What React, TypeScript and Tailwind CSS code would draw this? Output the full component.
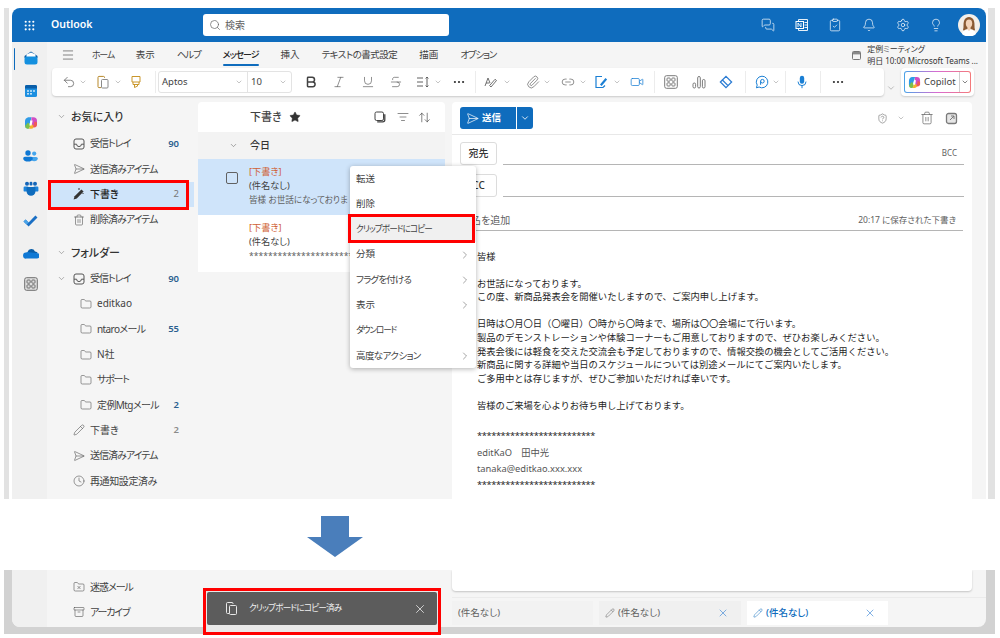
import type { ReactNode } from 'react';
import {
  Archive,
  ArrowUpDown,
  Bell,
  Bold,
  ChevronDown,
  ChevronRight,
  Clock,
  Ellipsis,
  Folder,
  FolderX,
  Grip,
  Italic,
  Lightbulb,
  Link2,
  ListFilter,
  Menu,
  MessagesSquare,
  Paperclip,
  Pencil,
  Search,
  SendHorizontal,
  Settings,
  ShieldQuestion,
  Star,
  Strikethrough,
  Trash2,
  Underline,
  Undo2,
  Video,
  X,
  ClipboardCheck,
} from 'lucide-react';

function Chev({ className = '' }: { className?: string }) {
  return <ChevronDown size={8} strokeWidth={1.5} className={`shrink-0 text-[#8a8a8a] ${className}`} />;
}

function Divider({ className = '' }: { className?: string }) {
  return <div className={`w-px h-[22px] shrink-0 bg-[#ececec] ${className}`} />;
}

function OutlookIcon() {
  return (
    <svg width="16" height="16" viewBox="0 0 16 16">
      <path d="M1.5 6 8 1.5 14.5 6v2H1.5z" fill="#0a5ea8" />
      <path d="M3.5 4.5 8 2.6l4.5 1.9V8h-9z" fill="#fff" />
      <rect x="1.5" y="6.5" width="13" height="8" rx="2.5" fill="#1490df" />
    </svg>
  );
}

function CalendarIcon() {
  return (
    <svg width="14" height="14" viewBox="0 0 14 14">
      <rect x="1" y="1" width="12" height="12" rx="1.6" fill="#1c8fe0" />
      <path d="M1 4.5V2.6A1.6 1.6 0 0 1 2.6 1h8.8A1.6 1.6 0 0 1 13 2.6v1.9z" fill="#0a5ea8" />
      <g fill="#bfe0f7">
        <rect x="3" y="6.2" width="2" height="1.6" />
        <rect x="6" y="6.2" width="2" height="1.6" />
        <rect x="9" y="6.2" width="2" height="1.6" />
        <rect x="3" y="9" width="2" height="1.6" />
        <rect x="6" y="9" width="2" height="1.6" />
      </g>
    </svg>
  );
}

function CopilotIcon({ size = 14 }: { size?: number }) {
  return (
    <svg width={size} height={size} viewBox="0 0 14 14">
      <path d="M4.2 1.2h3.4L6 7 3.8 12.6A3 3 0 0 1 1 9.8V5.6a4.4 4.4 0 0 1 3.2-4.4z" fill="#2f9be6" />
      <path d="M1.4 9.6 4 6.4 6.6 9 5 12.8H3.6A2.6 2.6 0 0 1 1.4 9.6z" fill="#7cc04a" />
      <path d="M5 12.8 7 7.4l3.6 1.4-1 2.4a2.6 2.6 0 0 1-2.4 1.6z" fill="#f4b32d" />
      <path d="M7.6 1.2h1.8A3.6 3.6 0 0 1 13 4.8v3.4a2.6 2.6 0 0 1-2.4 2.2L7 7.6z" fill="#d04fc4" />
      <path d="M10.6 5.2 13 6.6v2.2a2.8 2.8 0 0 1-2.8 2.6l-1.2-.2z" fill="#ef5a58" />
      <path d="M6.4 4.6h2.2L7.6 9.4H5.4z" fill="#fff" />
    </svg>
  );
}

function PeopleIcon() {
  return (
    <svg width="15" height="14" viewBox="0 0 15 14">
      <circle cx="5" cy="4" r="2.7" fill="#0f78d4" />
      <circle cx="11.2" cy="4.6" r="2.1" fill="#45a5ec" />
      <path d="M9 8h4.2a1.6 1.6 0 0 1 1.6 1.6c0 1.7-1.6 2.6-3.6 2.6-1 0-1.8-.2-2.5-.7z" fill="#45a5ec" />
      <path d="M1.8 7.8h6.4A1.6 1.6 0 0 1 9.8 9.4c0 2-2 3.1-4.8 3.1S.2 11.4.2 9.4a1.6 1.6 0 0 1 1.6-1.6z" fill="#0f78d4" />
    </svg>
  );
}

function TeamsIcon() {
  return (
    <svg width="16" height="15" viewBox="0 0 16 15">
      <circle cx="4" cy="2.8" r="2" fill="#1465b8" />
      <circle cx="12" cy="2.8" r="2" fill="#1465b8" />
      <rect x="0.6" y="5.6" width="5" height="5" rx="1.2" fill="#1c84dc" />
      <rect x="10.4" y="5.6" width="5" height="5" rx="1.2" fill="#1c84dc" />
      <path d="M3.6 6h8.8v4.4a4.4 4.4 0 0 1-8.8 0z" fill="#0f6cbd" />
      <rect x="6.6" y="0.8" width="2.8" height="3.6" rx="1.2" fill="#1465b8" />
    </svg>
  );
}

function TodoIcon() {
  return (
    <svg width="15" height="12" viewBox="0 0 15 12">
      <path d="M.5 6.6 2.6 4.4l3 3L12.4.4l2.1 2.2L5.6 11.6z" fill="#1a6fc4" />
      <path d="M.5 6.6 2.6 4.4l3 3-1.9 2z" fill="#4aa3e8" />
    </svg>
  );
}

function OneDriveIcon() {
  return (
    <svg width="16" height="11" viewBox="0 0 16 11">
      <path d="M4.6 3.8A4 4 0 0 1 12 3.4a3 3 0 0 1 2.8 1.6L6.4 8z" fill="#0a5ea8" />
      <path d="M3.4 10.6A3 3 0 0 1 2.8 4.6a3.6 3.6 0 0 1 3.4-.4L15 5.2a2.8 2.8 0 0 1-1 5.4z" fill="#0f78d4" />
    </svg>
  );
}

function AppsIcon({ light }: { light?: boolean }) {
  return (
    <svg width="14" height="14" viewBox="0 0 14 14" fill="none" stroke={light ? '#7a7a7a' : '#6e6e6e'}>
      <rect x="0.7" y="0.7" width="12.6" height="12.6" rx="1.8" fill={light ? 'none' : '#dedede'} />
      <rect x="3" y="3" width="3.2" height="3.2" rx="0.8" />
      <rect x="7.8" y="3" width="3.2" height="3.2" rx="0.8" />
      <rect x="3" y="7.8" width="3.2" height="3.2" rx="0.8" />
      <rect x="7.8" y="7.8" width="3.2" height="3.2" rx="0.8" />
    </svg>
  );
}

function Avatar() {
  return (
    <svg width="22" height="22" viewBox="0 0 22 22">
      <circle cx="11" cy="11" r="11" fill="#f3efe9" />
      <path d="M5 16c1-3 0-6 1-9 1-3 3-4 5-4s4 1 5 4c1 3 0 6 1 9-2 2-10 2-12 0z" fill="#8a5a33" />
      <ellipse cx="11" cy="9.6" rx="3.2" ry="4" fill="#f3d3b8" />
      <path d="M4 20c1-4 4-5 7-5s6 1 7 5a11 11 0 0 1-14 0z" fill="#fff" />
      <path d="M9.4 13h3.2v2.4L11 17l-1.6-1.6z" fill="#f3d3b8" />
    </svg>
  );
}

function TrayIcon() {
  return (
    <svg width="12" height="12" viewBox="0 0 12 12" fill="none" stroke="currentColor">
      <rect x="1" y="1" width="10" height="10" rx="2" />
      <path d="M1 6.2h2.6a2.4 2.4 0 0 0 4.8 0H11" />
    </svg>
  );
}

function CopyIcon() {
  return (
    <svg width="12" height="12" viewBox="0 0 12 12" fill="none" stroke="currentColor">
      <rect x="1" y="1" width="8.5" height="8.5" rx="1.6" />
      <path d="M10.8 3.2v5.6a2 2 0 0 1-2 2H3.2" strokeWidth="1.3" />
    </svg>
  );
}

function FolderRow({ icon, label, count, sub, muted, labelClass = 'tracking-[-1px]' }: { icon: ReactNode; label: string; count?: string; sub?: boolean; muted?: boolean; labelClass?: string }) {
  return (
    <div className={`h-[25.3px] flex items-center gap-[5px] pr-[19px] ${sub ? 'pl-[32px]' : 'pl-[25px]'}`}>
      <span className="w-[13px] shrink-0 flex justify-center text-[#555]">{icon}</span>
      <span className={`text-[10px] text-[#424242] whitespace-nowrap ${labelClass}`}>{label}</span>
      {count && <span className={`ml-auto text-[9.5px] font-semibold ${muted ? 'text-[#8a8a8a] font-normal' : 'text-[#2b5f8f]'}`}>{count}</span>}
    </div>
  );
}

function SectionRow({ label, className = '' }: { label: string; className?: string }) {
  return (
    <div className={`h-[25.3px] flex items-center pl-[10px] ${className}`}>
      <ChevronDown size={9} strokeWidth={1.5} className="text-[#777]" />
      <span className="ml-[5px] text-[11px] font-medium text-[#333]">{label}</span>
    </div>
  );
}

function FolderPane() {
  return (
    <div className="w-[151px] shrink-0 pt-[2.35px]">
      <SectionRow label="お気に入り" />
      <div className="mt-[1.7px]">
        <FolderRow icon={<TrayIcon />} label="受信トレイ" count="90" />
        <FolderRow icon={<SendHorizontal size={12} strokeWidth={1.2} />} label="送信済みアイテム" />
        <div className="h-[25.3px] mx-[4px] flex items-center gap-[5px] pl-[21px] pr-[15px] bg-[#cfe4fa]">
          <span className="w-[13px] shrink-0 flex justify-center text-[#333]">
            <svg width="13" height="13" viewBox="0 0 13 13">
              <path d="M9.4 1.4 11.6 3.6 4.8 10.4 1.6 11.4 2.6 8.2z" fill="#333" />
              <path d="M8 1h-2M11 6v-1" stroke="#333" />
            </svg>
          </span>
          <span className="text-[10px] text-[#242424] font-medium">下書き</span>
          <span className="ml-auto text-[9.5px] text-[#777]">2</span>
        </div>
        <FolderRow icon={<Trash2 size={12} strokeWidth={1.2} />} label="削除済みアイテム" />
      </div>
      <SectionRow label="フォルダー" className="mt-[7.6px]" />
      <div className="mt-[0.6px]">
        <div className="h-[25.3px] flex items-center pl-[10px] pr-[19px]">
          <ChevronDown size={9} strokeWidth={1.5} className="text-[#777]" />
          <span className="ml-[6px] w-[13px] flex justify-center text-[#555]"><TrayIcon /></span>
          <span className="ml-[5px] text-[10px] tracking-[-1px] text-[#424242]">受信トレイ</span>
          <span className="ml-auto text-[9.5px] font-semibold text-[#2b5f8f]">90</span>
        </div>
        <FolderRow sub icon={<Folder size={12} strokeWidth={1.2} />} label="editkao" labelClass="" />
        <FolderRow sub icon={<Folder size={12} strokeWidth={1.2} />} label="ntaroメール" count="55" labelClass="tracking-[-0.6px]" />
        <FolderRow sub icon={<Folder size={12} strokeWidth={1.2} />} label="N社" labelClass="" />
        <FolderRow sub icon={<Folder size={12} strokeWidth={1.2} />} label="サポート" labelClass="text-[9px] tracking-[-1.2px]" />
        <FolderRow sub icon={<Folder size={12} strokeWidth={1.2} />} label="定例Mtgメール" count="2" labelClass="tracking-[-0.6px]" />
        <FolderRow icon={<Pencil size={12} strokeWidth={1.2} />} label="下書き" count="2" muted labelClass="" />
        <FolderRow icon={<SendHorizontal size={12} strokeWidth={1.2} />} label="送信済みアイテム" />
        <FolderRow icon={<Clock size={12} strokeWidth={1.2} />} label="再通知設定済み" labelClass="tracking-[-0.4px]" />
      </div>
    </div>
  );
}

function DraftItem({ preview, selected, checkbox }: { preview: string; selected?: boolean; checkbox?: boolean }) {
  return (
    <div className={`h-[56.5px] flex pl-[28px] pt-[6px] ${selected ? 'bg-[#cfe4fa]' : 'bg-white'}`}>
      <div className="w-[23px] shrink-0 pt-[7px]">
        {checkbox && <div className="w-[12px] h-[12px] rounded-[2px] border border-[#616161]" />}
      </div>
      <div className="w-[101px] text-[9.2px] leading-[14px] text-[#424242] whitespace-nowrap">
        <div className="text-[#cf5f35]">[下書き]</div>
        <div>(件名なし)</div>
        <div className="text-[8.6px] text-[#616161]">{preview}</div>
      </div>
    </div>
  );
}

function ListPane() {
  return (
    <div className="w-[247px] shrink-0 flex flex-col">
      <div className="h-[30px] rounded-t bg-white flex items-center pl-[52px] pr-[14px] text-[#424242]">
        <span className="text-[11px] font-medium">下書き</span>
        <Star size={12} fill="#333" strokeWidth={1} className="ml-[7px] text-[#333]" />
        <span className="ml-auto"><CopyIcon /></span>
        <ListFilter size={12} strokeWidth={1.2} className="ml-[11px]" />
        <ArrowUpDown size={13} strokeWidth={1.2} className="ml-[9px]" />
      </div>
      <div className="h-[26.5px] flex items-center pl-[31px] bg-[#f3f3f3]">
        <ChevronDown size={9} strokeWidth={1.5} className="text-[#666]" />
        <span className="ml-[12px] text-[10px] font-medium text-[#333]">今日</span>
      </div>
      <DraftItem selected checkbox preview="皆様 お世話になっておりま" />
      <DraftItem preview="**********************" />
    </div>
  );
}

function Recipient({ label, time }: { label: string; time?: string }) {
  return (
    <div className="flex items-end h-[31px]">
      <div className="w-[37px] h-[23px] ml-[8px] rounded-[3px] border border-[#dcdcdc] flex items-center justify-center text-[10px] font-medium text-[#333]">{label}</div>
      <div className="ml-[6px] w-[461px] h-[23px] border-b border-[#b5b5b5] flex items-center justify-end pr-[7px] text-[8px] text-[#616161]">{time}</div>
    </div>
  );
}

function BodyLine({ children, className = '' }: { children?: ReactNode; className?: string }) {
  return <div className={`h-[13.6px] leading-[13.6px] whitespace-nowrap ${className}`}>{children}</div>;
}

function ReadingPane() {
  return (
    <div className="w-[520px] h-[397px] shrink-0 ml-[7px] rounded-t bg-white overflow-hidden">
      <div className="h-[33px] border-b border-[#e8e8e8] flex items-center pl-[8px] pr-[14px] text-[#616161]">
        <div className="h-[22px] w-[56px] rounded-l-[3px] bg-[#0f6cbd] text-white flex items-center pl-[6px] gap-[3px]">
          <SendHorizontal size={13} strokeWidth={1.3} />
          <span className="text-[9.5px] font-semibold">送信</span>
        </div>
        <div className="h-[22px] w-[16px] ml-px rounded-r-[3px] bg-[#0f6cbd] text-white flex items-center justify-center">
          <ChevronDown size={10} strokeWidth={2} />
        </div>
        <ShieldQuestion size={11} strokeWidth={1.2} className="ml-auto" />
        <Chev className="ml-[9px]" />
        <Trash2 size={14} strokeWidth={1.2} className="ml-[15px]" />
        <svg width="13" height="13" viewBox="0 0 13 13" fill="none" stroke="#7a7a7a" className="ml-[11px]">
          <rect x="1.5" y="1.5" width="10" height="10" rx="2" strokeWidth="1.3" fill="#e6e6e6" />
          <path d="M5 8 9 4M6 4h3v3" />
        </svg>
      </div>
      <div className="mt-[-1px]">
        <Recipient label="宛先" time="BCC" />
        <div className="mt-[0.5px]"><Recipient label="CC" /></div>
      </div>
      <div className="mx-[9px] h-[34px] border-b border-[#b5b5b5] flex items-center justify-between pr-[7px] pt-[14px] text-[#616161]">
        <span className="text-[10px]">件名を追加</span>
        <span className="text-[8.5px]">20:17 に保存された下書き</span>
      </div>
      <div className="ml-[25px] mt-[19px] text-[9.3px] text-[#242424] [font-feature-settings:normal]">
        <BodyLine>皆様</BodyLine>
        <BodyLine />
        <BodyLine>お世話になっております。</BodyLine>
        <BodyLine>この度、新商品発表会を開催いたしますので、ご案内申し上げます。</BodyLine>
        <BodyLine />
        <BodyLine>日時は〇月〇日（〇曜日）〇時から〇時まで、場所は〇〇会場にて行います。</BodyLine>
        <BodyLine>製品のデモンストレーションや体験コーナーもご用意しておりますので、ぜひお楽しみください。</BodyLine>
        <BodyLine>発表会後には軽食を交えた交流会も予定しておりますので、情報交換の機会としてご活用ください。</BodyLine>
        <BodyLine>新商品に関する詳細や当日のスケジュールについては別途メールにてご案内いたします。</BodyLine>
        <BodyLine>ご多用中とは存じますが、ぜひご参加いただければ幸いです。</BodyLine>
        <BodyLine />
        <BodyLine>皆様のご来場を心よりお待ち申し上げております。</BodyLine>
        <BodyLine />
        <BodyLine className="mt-[3px] tracking-[-0.4px]">*************************</BodyLine>
        <BodyLine className="mt-[3px] text-[#555]">editKaO　田中光</BodyLine>
        <BodyLine className="mt-[2.5px] text-[#555]">tanaka@editkao.xxx.xxx</BodyLine>
        <BodyLine className="mt-[2px] tracking-[-0.4px]">*************************</BodyLine>
      </div>
    </div>
  );
}

function Toolbar() {
  return (
    <div className="flex ml-[5px] h-[28px]">
      <div className="w-[832px] h-[28px] rounded-[4px] bg-white shadow-[0_1px_2px_rgba(0,0,0,0.18)] flex items-center pl-[10px] text-[#616161] shrink-0">
        <Undo2 size={14} strokeWidth={1.3} />
        <Chev className="ml-[3px]" />
        <svg width="14" height="14" viewBox="0 0 14 14" fill="none" stroke="#b8892a" className="ml-[9px] shrink-0">
          <path d="M8.5 3V2.4a1 1 0 0 0-1-1H3a1 1 0 0 0-1 1v9.2a1 1 0 0 0 1 1h2" />
          <rect x="5.5" y="4.5" width="6.5" height="8.5" rx="1" stroke="#8a8a8a" />
        </svg>
        <Chev className="ml-[4px]" />
        <svg width="14" height="14" viewBox="0 0 14 14" fill="none" stroke="#c9962b" className="ml-[7px] shrink-0">
          <path d="M3 1.5h8v5.5H3zM4 7v2.5h6V7M5.5 9.500v3l3-1.400V9.500" />
        </svg>
        <Divider className="ml-[12px]" />
        <div className="ml-[2px] w-[134px] h-[22px] shrink-0 rounded-[3px] border border-[#e3e3e3] flex items-center text-[9.5px] text-[#424242]">
          <div className="w-[89px] h-full flex items-center justify-between pl-[3px] pr-[4px] border-r border-[#e3e3e3]">
            Aptos
            <Chev />
          </div>
          <div className="flex-1 flex items-center justify-between pl-[3px] pr-[4px]">
            10
            <Chev />
          </div>
        </div>
        <Bold size={14} strokeWidth={2.6} className="ml-[12px] text-[#424242]" />
        <Italic size={14} strokeWidth={1.2} className="ml-[14px]" />
        <Underline size={14} strokeWidth={1.2} className="ml-[15px]" />
        <Strikethrough size={14} strokeWidth={1.2} className="ml-[14px]" />
        <svg width="14" height="14" viewBox="0 0 14 14" fill="none" stroke="#616161" className="ml-[13px] shrink-0">
          <path d="M1 3h6M1 7h6M1 11h6M11 2v10M9.6 3.4 11 2l1.4 1.4M9.6 10.6 11 12l1.4-1.4" />
        </svg>
        <Chev className="ml-[4px]" />
        <Ellipsis size={14} strokeWidth={1.8} className="ml-[10px] text-[#333]" />
        <Divider className="ml-[9px]" />
        <svg width="14" height="14" viewBox="0 0 14 14" fill="none" stroke="#616161" className="ml-[8px] shrink-0">
          <path d="M1 11 4 3l2 5M2 8h3.5M7 12l5.5-6.5-1.5-1.2L5.6 10.6z" strokeWidth="0.9" />
        </svg>
        <Chev className="ml-[5px]" />
        <Paperclip size={14} strokeWidth={1.2} className="ml-[15px]" />
        <Chev className="ml-[3px]" />
        <Link2 size={14} strokeWidth={1.2} className="ml-[10px]" />
        <Chev className="ml-[4px]" />
        <svg width="14" height="14" viewBox="0 0 14 14" fill="none" stroke="#1a7fd4" strokeWidth="1.2" className="ml-[7px] shrink-0">
          <path d="M8 1.5H2v11h7l2-2" />
          <path d="M6 9.500 11.500 3l1.600 1.400L7.600 11z" fill="#1a7fd4" stroke="none" />
        </svg>
        <Chev className="ml-[5px]" />
        <Video size={14} strokeWidth={1.3} className="ml-[9px] text-[#1a7fd4]" />
        <Divider className="ml-[10px]" />
        <span className="ml-[9px] shrink-0"><AppsIcon light /></span>
        <svg width="14" height="14" viewBox="0 0 14 14" fill="none" stroke="#7a7a7a" className="ml-[14px] shrink-0">
          <rect x="1" y="8" width="2.6" height="5" rx="1.3" />
          <rect x="5.7" y="1.5" width="2.6" height="11.5" rx="1.3" />
          <rect x="10.4" y="4.5" width="2.6" height="8.5" rx="1.3" />
        </svg>
        <svg width="14" height="14" viewBox="0 0 14 14" fill="none" stroke="#2b7cd3" strokeWidth="1.3" className="ml-[13px] shrink-0">
          <path d="M7 1.4 12.6 7 9 10.6 3.4 5zM3.4 5 1.4 7 7 12.6 9 10.6" />
        </svg>
        <Divider className="ml-[12px]" />
        <svg width="14" height="14" viewBox="0 0 14 14" fill="none" stroke="#1a7fd4" className="ml-[9px] shrink-0">
          <path d="M7 1.2a5.8 5.8 0 1 1-2.9 10.8L1.4 12.8l.8-2.7A5.8 5.8 0 0 1 7 1.2z" />
          <circle cx="7.4" cy="6.2" r="1.8" />
          <path d="M5.6 6.2v3.6" />
        </svg>
        <Chev className="ml-[3px]" />
        <Divider className="ml-[5px]" />
        <svg width="14" height="14" viewBox="0 0 14 14" className="ml-[9px] shrink-0">
          <rect x="4.8" y="0.8" width="4.4" height="8" rx="2.2" fill="#1a7fd4" />
          <path d="M3 6.6a4 4 0 0 0 8 0M7 10.6v2.6" fill="none" stroke="#1a7fd4" />
        </svg>
        <Divider className="ml-[11px]" />
        <Ellipsis size={14} strokeWidth={1.8} className="ml-[10px] text-[#333]" />
      </div>
      <div className="w-[17px] shrink-0 flex items-end pl-[2px] pb-[3px]">
        <ChevronDown size={10} strokeWidth={1.3} className="text-[#8a8a8a]" />
      </div>
      <div className="w-[73px] h-[28px] rounded-[4px] bg-white shadow-[0_1px_2px_rgba(0,0,0,0.18)] flex items-center justify-center shrink-0">
        <div className="w-[67px] h-[22px] rounded-[3px] bg-[linear-gradient(90deg,#4aa3e8,#d96bd0,#f47a7a)] p-px">
          <div className="w-full h-full rounded-[2px] bg-white flex items-center pl-[3px] text-[9.5px] text-[#424242]">
            <CopilotIcon size={13} />
            <span className="ml-[3px]">Copilot</span>
            <div className="ml-auto w-[11px] h-full border-l border-[#cfcfcf] flex items-center justify-center">
              <ChevronDown size={8} strokeWidth={1.8} className="text-[#333]" />
            </div>
          </div>
        </div>
      </div>
    </div>
  );
}

function Header() {
  return (
    <div className="h-[34px] shrink-0 rounded-t-lg bg-[#0f6cbd] flex items-center text-white">
      <div className="w-[34px] flex justify-center"><Grip size={13} strokeWidth={2} /></div>
      <div className="w-[157px] pl-[5px] text-[10.5px] font-semibold">Outlook</div>
      <div className="w-[246px] h-[22px] rounded-[3px] bg-white flex items-center pl-[6px] gap-[4px] text-[10px] text-[#616161]">
        <Search size={12} strokeWidth={1.4} />
        <span>検索</span>
      </div>
      <div className="ml-auto flex items-center pr-[6px]">
        <span className="w-[33.6px] flex justify-center"><MessagesSquare size={14} strokeWidth={1.2} /></span>
        <span className="w-[33.6px] flex justify-center">
          <svg width="14" height="14" viewBox="0 0 14 14" fill="none" stroke="#fff">
            <path d="M3.5 1.5h9v11h-9zM9.5 4.5h3M9.5 7h3M9.5 9.5h3" strokeWidth="0.9" />
            <rect x="1" y="3.5" width="7.5" height="7" fill="#0f6cbd" />
            <path d="M3 9V5l3 4V5" strokeWidth="0.9" />
          </svg>
        </span>
        <span className="w-[33.6px] flex justify-center"><ClipboardCheck size={14} strokeWidth={1.2} /></span>
        <span className="w-[33.6px] flex justify-center"><Bell size={14} strokeWidth={1.2} /></span>
        <span className="w-[33.6px] flex justify-center"><Settings size={14} strokeWidth={1.2} /></span>
        <span className="w-[33.6px] flex justify-center"><Lightbulb size={14} strokeWidth={1.2} /></span>
        <span className="ml-[5px]"><Avatar /></span>
      </div>
    </div>
  );
}

function Tabs() {
  return (
    <div className="h-[26px] flex items-center pl-[14px] text-[9.5px] text-[#424242] relative">
      <Menu size={14} strokeWidth={1.2} className="text-[#555]" />
      <div className="ml-[17px] flex items-center gap-[22px]">
        <span className="text-[9px] tracking-[-1.300px]">ホーム</span>
        <span>表示</span>
        <span className="tracking-[-1.2px]">ヘルプ</span>
        <span className="relative font-medium text-[#242424] text-[9px] tracking-[-1px]">
          メッセージ
          <span className="absolute left-0 right-0 -bottom-[4px] h-[2px] rounded-sm bg-[#0f6cbd]" />
        </span>
        <span>挿入</span>
        <span className="tracking-[-0.5px]">テキストの書式設定</span>
        <span>描画</span>
        <span className="tracking-[-1.2px]">オプション</span>
      </div>
      <div className="ml-auto flex items-center gap-[6px] pr-[8px]">
        <svg width="9" height="9" viewBox="0 0 9 9" fill="#8a8a8a">
          <path d="M1.5.5h6a1 1 0 0 1 1 1v6a1 1 0 0 1-1 1h-6a1 1 0 0 1-1-1v-6a1 1 0 0 1 1-1z" fill="none" stroke="#777" />
          <rect x="1" y="1" width="7" height="2.4" />
        </svg>
        <div className="text-[8px] leading-[12px] text-[#333] whitespace-nowrap">
          <div>定例ミーティング</div>
          <div>明日 10:00 Microsoft Teams ...</div>
        </div>
      </div>
    </div>
  );
}

function Rail() {
  return (
    <div className="w-[35px] shrink-0 bg-[#f0f0f0] relative pl-[2px]">
      <div className="h-[32.5px] flex items-center justify-center relative">
        <span className="absolute left-[-0.5px] top-[6px] w-[1.5px] h-[22px] rounded-sm bg-[#0f6cbd]" />
        <OutlookIcon />
      </div>
      <div className="h-[32.5px] flex items-center justify-center"><CalendarIcon /></div>
      <div className="h-[32.5px] flex items-center justify-center"><CopilotIcon /></div>
      <div className="h-[32.5px] flex items-center justify-center"><PeopleIcon /></div>
      <div className="h-[32.5px] flex items-center justify-center"><TeamsIcon /></div>
      <div className="h-[32.5px] flex items-center justify-center"><TodoIcon /></div>
      <div className="h-[32.5px] flex items-center justify-center"><OneDriveIcon /></div>
      <div className="h-[28px] flex items-center justify-center"><AppsIcon /></div>
    </div>
  );
}

function ContextMenu() {
  const rows: [string, string, boolean, boolean][] = [
    ['転送', '', false, false],
    ['削除', '', false, false],
    ['クリップボードにコピー', 'text-[8.6px] tracking-[-0.900px]', false, true],
    ['分類', '', true, false],
    ['フラグを付ける', 'tracking-[-0.8px]', true, false],
    ['表示', '', true, false],
    ['ダウンロード', 'text-[8.6px] tracking-[-1.100px]', false, false],
    ['高度なアクション', 'tracking-[-0.6px]', true, false],
  ];
  return (
    <div className="absolute left-[350px] top-[166px] w-[126px] rounded-[3px] bg-white shadow-[0_1px_5px_rgba(0,0,0,0.3)] overflow-hidden">
      {rows.map(([label, tracking, more, hover]) => (
        <div key={label} className={`h-[25.3px] flex items-center justify-between pl-[6px] pr-[5px] text-[9.5px] text-[#424242] ${hover ? 'bg-[#f0f0f0]' : ''}`}>
          <span className={tracking}>{label}</span>
          {more && <ChevronRight size={12} strokeWidth={1.2} className="text-[#666]" />}
        </div>
      ))}
    </div>
  );
}

function DraftTab({ active, className = '' }: { active?: boolean; className?: string }) {
  return (
    <div className={`h-[24px] flex items-center pl-[6px] pr-[12px] shrink-0 ${active ? 'bg-white text-[#0f6cbd] font-medium' : 'bg-[#f0f0f0] text-[#616161]'} ${className}`}>
      <Pencil size={10} strokeWidth={1.2} />
      <span className="ml-[3px] text-[9.5px]">(件名なし)</span>
      <X size={12} strokeWidth={1.2} className="ml-auto text-[#2b7cd3]" />
    </div>
  );
}

export default function App() {
  return (
    <div className="relative w-[1000px] h-[638px] overflow-hidden bg-white font-['Noto_Sans','Noto_Sans_CJK_JP',sans-serif] [font-feature-settings:'palt']">
      {/* upper crop */}
      <div className="h-[499px] flex pt-[8px] pl-[4px]">
        <div className="w-[5px] bg-[#e2e2e2] shrink-0" />
        <div className="w-[974px] ml-[3px] shrink-0 flex flex-col overflow-hidden">
          <Header />
          <div className="flex flex-1 min-h-0">
            <Rail />
            <div className="flex-1 bg-[#f5f5f5] flex flex-col">
              <Tabs />
              <Toolbar />
              <div className="flex mt-[6px] min-h-0">
                <FolderPane />
                <ListPane />
                <ReadingPane />
              </div>
            </div>
          </div>
        </div>
        <div className="w-[7px] ml-[2px] bg-[#e2e2e2] shrink-0" />
      </div>

      {/* arrow band */}
      <div className="h-[71px] pl-[307px] pt-[17px]">
        <svg width="56" height="41" viewBox="0 0 56 41">
          <polygon points="14,0 42,0 42,21 56,21 28,41 0,21 14,21" fill="#4a7ebb" />
        </svg>
      </div>

      {/* lower crop */}
      <div className="h-[64px] ml-[4px] w-[991px] bg-[#d2d2d2] pl-[8px] pr-[9px]">
        <div className="h-[57px] rounded-b-lg bg-[#f5f5f5] flex overflow-hidden">
          <div className="w-[35px] shrink-0 bg-[#f0f0f0]" />
          <div className="w-[151px] shrink-0 pt-[4.5px]">
            <FolderRow icon={<FolderX size={12} strokeWidth={1.2} />} label="迷惑メール" />
            <FolderRow icon={<Archive size={12} strokeWidth={1.2} />} label="アーカイブ" labelClass="text-[9px] tracking-[-1.2px]" />
          </div>
          <div className="w-[254px] shrink-0" />
          <div className="flex-1">
            <div className="w-[520px] h-[21px] bg-white rounded-b shadow-[0_1px_2px_rgba(0,0,0,0.2)]" />
            <div className="mt-[6px] pt-[3px] border-t border-[#ebebeb] flex">
              <div className="w-[141px] h-[24px] shrink-0 bg-[#f2f2f2] pl-[6px] flex items-center text-[9.5px] text-[#616161]">(件名なし)</div>
              <DraftTab className="ml-[6px] w-[142px]" />
              <DraftTab active className="ml-[6px] w-[141px]" />
            </div>
          </div>
        </div>
      </div>

      {/* overlays */}
      <ContextMenu />
      <div className="absolute left-[48px] top-[180px] w-[141px] h-[30px] border-[3px] border-[#ff0000]" />
      <div className="absolute left-[348px] top-[214px] w-[127px] h-[29px] border-[3px] border-[#ff0000]" />
      <div className="absolute left-[203px] top-[588px] w-[238px] h-[47px] border-[3px] border-[#ff0000] bg-[#e9e9e9] p-px">
        <div className="w-full h-[33px] bg-[#5c5c5c] rounded-[2px] flex items-center pl-[18px] pr-[10px] text-[#f0f0f0]">
          <svg width="13" height="13" viewBox="0 0 13 13" fill="none" stroke="#e8e8e8">
            <path d="M8 2V1.5a1 1 0 0 0-1-1H2.5a1 1 0 0 0-1 1v9a1 1 0 0 0 1 1H4" />
            <rect x="4.5" y="3.5" width="7" height="9" rx="1" />
          </svg>
          <span className="ml-[11px] text-[8.6px] tracking-[-0.800px]">クリップボードにコピー済み</span>
          <X size={14} strokeWidth={1.3} className="ml-auto" />
        </div>
      </div>
    </div>
  );
}
